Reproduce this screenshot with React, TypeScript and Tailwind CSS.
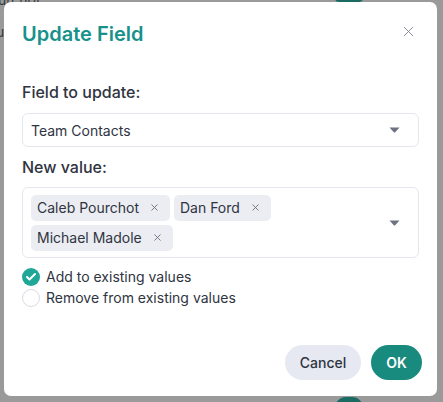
import { X, Check } from 'lucide-react';

// ---------------------------------------------------------------------------
// Small pieces
// ---------------------------------------------------------------------------
function Caret() {
  return (
    <svg width="11" height="6" viewBox="0 0 11 6" className="shrink-0">
      <path d="M0.5 0.5 H10.5 L6.2 5.2 Q5.5 5.9 4.8 5.2 Z" fill="#6e7280" />
    </svg>
  );
}

function Chip({ label }: { label: string }) {
  return (
    <span className="flex items-center gap-[10px] h-[26px] pl-[6px] pr-[10px] rounded-[5px] bg-[#ebedf2] text-[14px] text-[#2f3441]">
      {label}
      <X size={11} strokeWidth={2} className="text-[#6b7080]" />
    </span>
  );
}

const CONTACTS = ['Caleb Pourchot', 'Dan Ford', 'Michael Madole'];

// ---------------------------------------------------------------------------
// Component
// ---------------------------------------------------------------------------
export default function App() {
  return (
    <div
      className="relative h-[402px] w-[443px] overflow-hidden bg-[#9a9a9a]"
      style={{ fontFamily: 'Inter, "Noto Sans", "Liberation Sans", sans-serif' }}
    >
      {/* page behind the overlay */}
      <span className="absolute left-[-2px] top-[-11px] text-[14px] text-[#3a3a3a]">urchot</span>
      <span className="absolute left-[-4px] top-[21px] text-[14px] text-[#3a3a3a]">u</span>
      <span className="absolute left-[335px] top-[-20px] h-[22px] w-[28px] rounded-[4px] bg-[#1b6b62]" />
      <span className="absolute left-[335px] top-[397px] h-[22px] w-[28px] rounded-full bg-[#1b6b62]" />

      {/* dialog */}
      <div className="absolute left-[4px] top-[2px] flex h-[394px] w-[433px] flex-col rounded-[7px] bg-white px-[18px] pt-[20px] pb-[16px]">
        <div className="flex items-start justify-between">
          <h2 className="text-[20px] font-semibold leading-[24px] text-[#17918a]">Update Field</h2>
          <X size={17} strokeWidth={1.2} className="mt-[1px] mr-[2px] text-[#767b8a]" />
        </div>

        <label className="mt-[36px] text-[16px] font-medium leading-[20px] text-[#2f3441]">Field to update:</label>
        <div className="mt-[11px] flex h-[34px] items-center justify-between rounded-[6px] border border-[#e5e7ee] pl-[8px] pr-[18px]">
          <span className="text-[14px] text-[#2f3441]">Team Contacts</span>
          <Caret />
        </div>

        <label className="mt-[10px] text-[16px] font-medium leading-[20px] text-[#2f3441]">New value:</label>
        <div className="mt-[10px] flex h-[71px] items-center justify-between rounded-[6px] border border-[#e5e7ee] pl-[8px] pr-[18px]">
          <div className="flex w-[250px] flex-wrap gap-x-[4px] gap-y-[4px]">
            {CONTACTS.map((c) => (
              <Chip key={c} label={c} />
            ))}
          </div>
          <Caret />
        </div>

        {/* options */}
        <div className="mt-[10px] flex flex-col gap-[3px]">
          <div className="flex items-center gap-[6px]">
            <span className="flex h-[18px] w-[18px] items-center justify-center rounded-full bg-[#21a797]">
              <Check size={12} strokeWidth={4} className="text-white" />
            </span>
            <span className="text-[14px] leading-[18px] text-[#2f3441]">Add to existing values</span>
          </div>
          <div className="flex items-center gap-[6px]">
            <span className="h-[18px] w-[18px] rounded-full border border-[#d9dbe3] bg-white" />
            <span className="text-[14px] leading-[18px] text-[#2f3441]">Remove from existing values</span>
          </div>
        </div>

        {/* actions */}
        <div className="mt-auto flex justify-end gap-[10px]">
          <button className="h-[35px] w-[76px] rounded-full bg-[#e6e9f1] text-[14px] font-medium text-[#2f3441]">
            Cancel
          </button>
          <button className="mr-[-3px] h-[35px] w-[51px] rounded-full bg-[#198a7e] text-[14px] font-semibold text-white">
            OK
          </button>
        </div>
      </div>
    </div>
  );
}
